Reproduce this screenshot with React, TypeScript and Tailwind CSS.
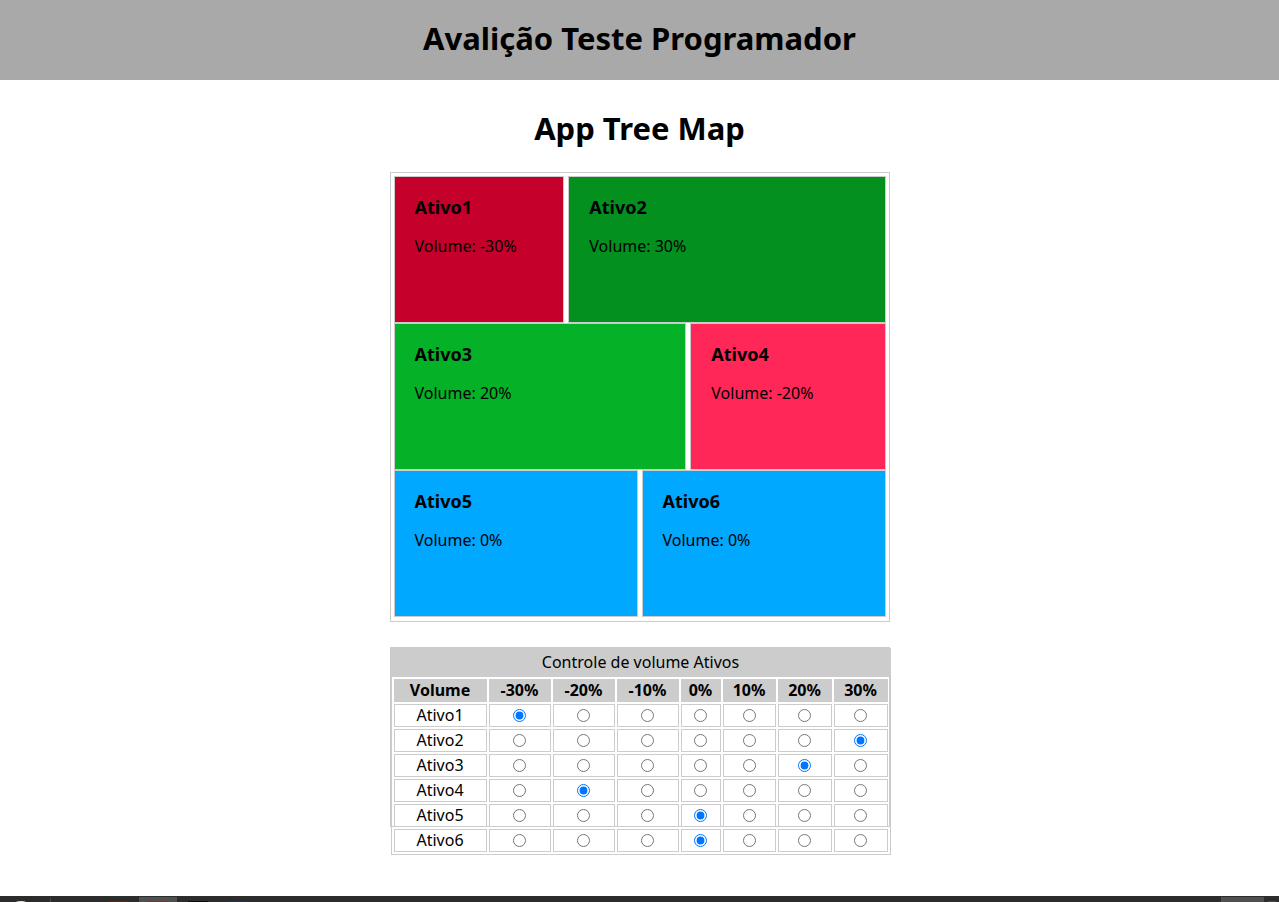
import { useState } from "react";

const LEVELS = [-30, -20, -10, 0, 10, 20, 30];

const FILLS: Record<string, string> = {
  "-30": "bg-[#c4002b]",
  "-20": "bg-[#ff2757]",
  "-10": "bg-[#ff6f8f]",
  "0": "bg-[#00a8ff]",
  "10": "bg-[#35d45a]",
  "20": "bg-[#04b127]",
  "30": "bg-[#04901f]",
};

const COLUMNS = [
  "w-[93px]",
  "w-[62px]",
  "w-[62px]",
  "w-[62px]",
  "w-[40px]",
  "w-[53px]",
  "w-[54px]",
  "w-[54px]",
];

const START = [-30, 30, 20, -20, 0, 0];

function Tile({ index, volume }: { index: number; volume: number }) {
  return (
    <article className={`min-w-0 border border-[#ccc] px-5 pt-5 ${FILLS[String(volume)]}`}>
      <h2 className="text-lg leading-5 font-bold">Ativo{index + 1}</h2>
      <p className="mt-[19px] text-base leading-5">Volume: {volume}%</p>
    </article>
  );
}

/* Two tiles share a row; the difference in volume moves the split from the middle. */
function TileRow({ first, volumes }: { first: number; volumes: number[] }) {
  const left = 50 + (volumes[first] - volumes[first + 1]) / 4;
  return (
    <div
      className="grid h-[147px] gap-1"
      style={{ gridTemplateColumns: `${left}fr ${100 - left}fr` }}
    >
      <Tile index={first} volume={volumes[first]} />
      <Tile index={first + 1} volume={volumes[first + 1]} />
    </div>
  );
}

function VolumeTable({
  volumes,
  onChange,
}: {
  volumes: number[];
  onChange: (index: number, level: number) => void;
}) {
  return (
    <table className="w-[500px] table-fixed border-separate border-spacing-[2px] border border-[#ccc] text-center text-base leading-[21px]">
      <caption className="h-7 bg-[#ccc] leading-7">Controle de volume Ativos</caption>
      <colgroup>
        {COLUMNS.map((width, i) => (
          <col key={i} className={width} />
        ))}
      </colgroup>
      <thead>
        <tr>
          <th scope="col" className="border border-[#ccc] bg-[#ccc] p-0 font-bold">
            Volume
          </th>
          {LEVELS.map((level) => (
            <th key={level} scope="col" className="border border-[#ccc] bg-[#ccc] p-0 font-bold">
              {level}%
            </th>
          ))}
        </tr>
      </thead>
      <tbody>
        {volumes.map((volume, i) => (
          <tr key={i}>
            <td className="border border-[#ccc] p-0">Ativo{i + 1}</td>
            {LEVELS.map((level) => (
              <td key={level} className="border border-[#ccc] p-0">
                <input
                  type="radio"
                  name={`ativo${i + 1}`}
                  aria-label={`Ativo${i + 1} ${level}%`}
                  checked={volume === level}
                  onChange={() => onChange(i, level)}
                  className="mx-auto block size-[13px]"
                />
              </td>
            ))}
          </tr>
        ))}
      </tbody>
    </table>
  );
}

function Dock() {
  return (
    <footer className="mt-auto flex h-[6px] items-start justify-between bg-[#2c2c2c]">
      <svg width="260" height="6" aria-hidden="true">
        <ellipse cx="21" cy="9" rx="8" ry="4" fill="#e8e8e4" />
        <rect x="50" y="2" width="1" height="4" fill="#4a4a4a" />
        <rect x="108" y="5" width="20" height="1" fill="#54281a" />
        <rect x="139" y="1" width="38" height="5" fill="#505050" />
        <rect x="148" y="5" width="20" height="1" fill="#6c3a38" />
        <rect x="188" y="5" width="20" height="1" fill="#0c0c0c" />
        <rect x="228" y="5" width="20" height="1" fill="#283348" />
      </svg>
      <svg width="79" height="6" aria-hidden="true">
        <rect x="21" y="1" width="43" height="5" fill="#505050" />
        <rect x="68" y="5" width="8" height="1" fill="#4a4a4a" />
      </svg>
    </footer>
  );
}

export default function App() {
  const [volumes, setVolumes] = useState(START);
  const change = (index: number, level: number) =>
    setVolumes((current) => current.map((v, i) => (i === index ? level : v)));

  return (
    <div className="flex min-h-screen flex-col bg-white font-['Noto_Sans',sans-serif] text-black">
      <header className="flex h-20 items-center justify-center bg-[#a9a9a9] pb-1">
        <h1 className="text-[31px] leading-9 font-bold">Avalição Teste Programador</h1>
      </header>
      <main className="flex flex-col items-center pb-10">
        <h1 className="mt-[30px] text-[31px] leading-9 font-bold">App Tree Map</h1>
        <section className="mt-[26px] h-[450px] w-[500px] border border-[#ccc] p-[3px]">
          {[0, 2, 4].map((first) => (
            <TileRow key={first} first={first} volumes={volumes} />
          ))}
        </section>
        <section className="mt-[25px] h-[180px] w-[500px] border border-[#ccc]">
          <VolumeTable volumes={volumes} onChange={change} />
        </section>
      </main>
      <Dock />
    </div>
  );
}
